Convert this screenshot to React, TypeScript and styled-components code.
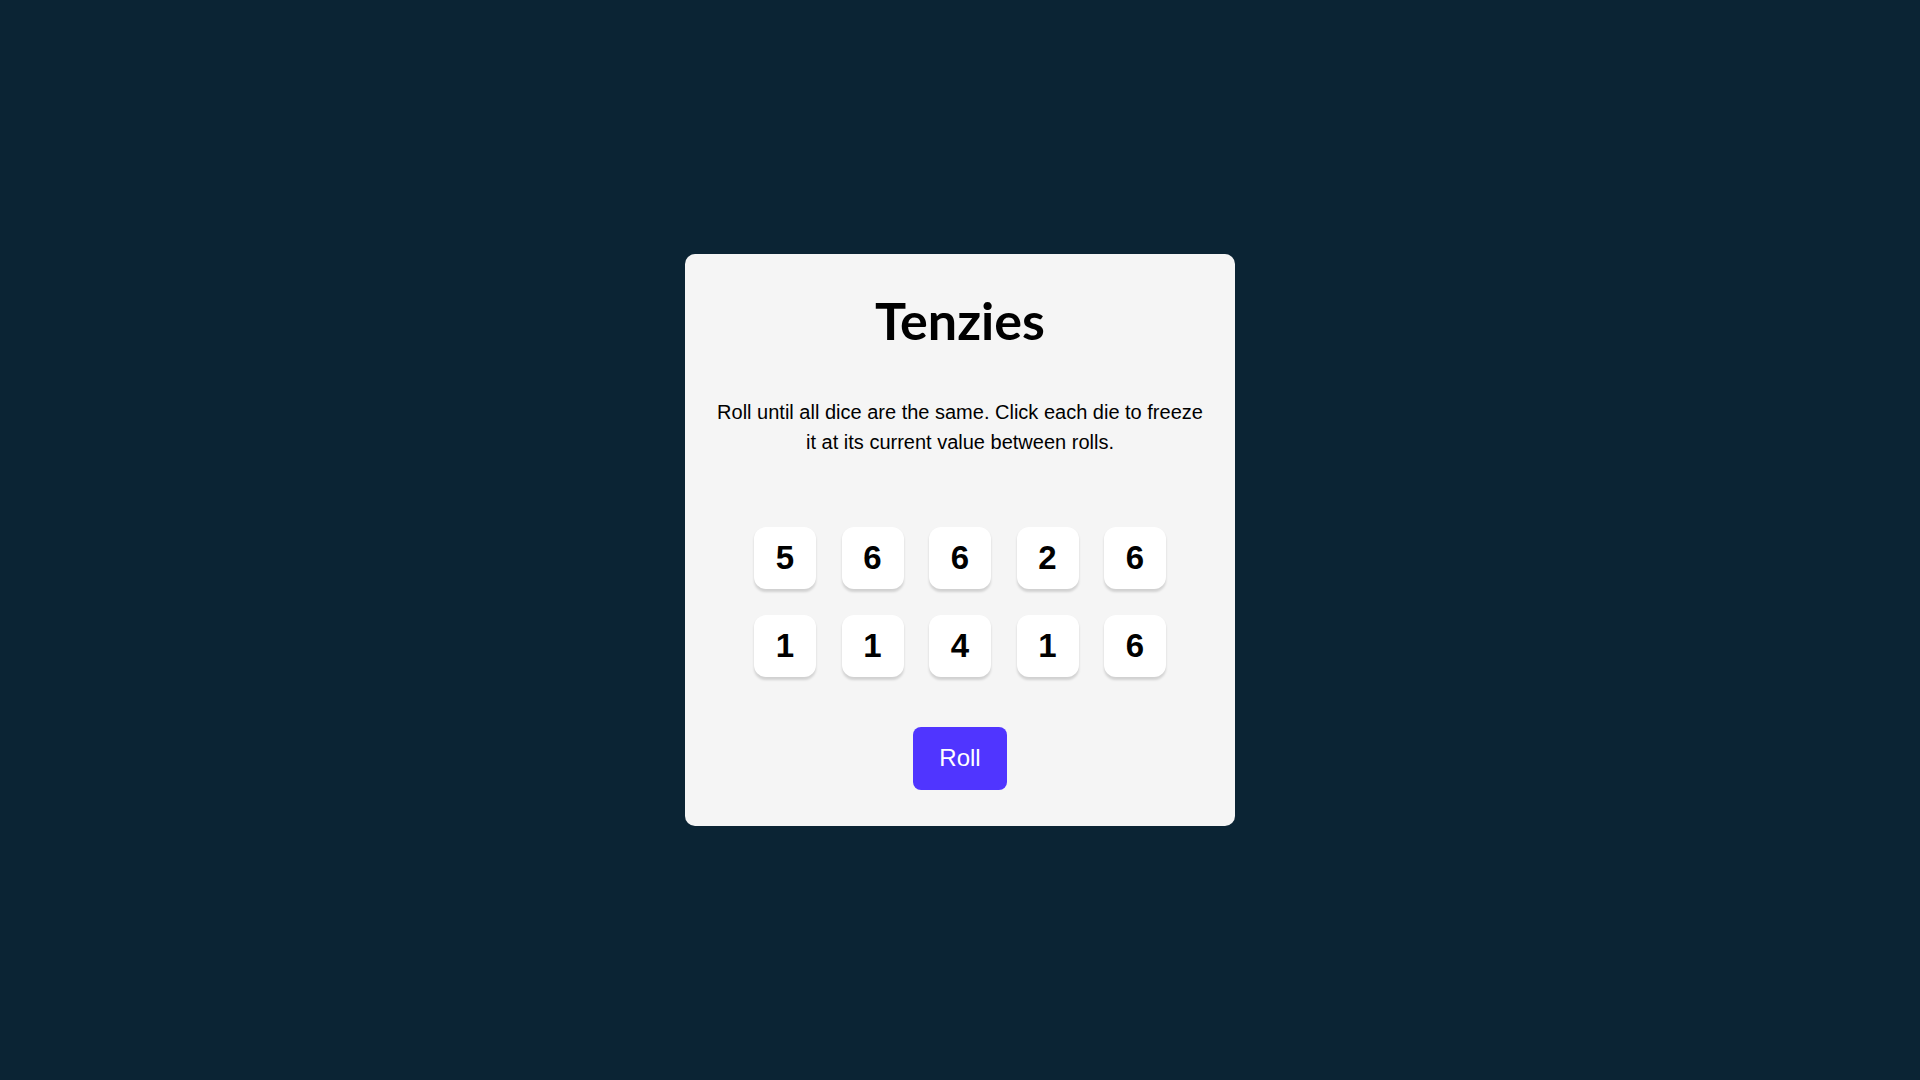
import React from "react";
import styled, { createGlobalStyle } from "styled-components";

const GlobalStyle = createGlobalStyle`
  html, body {
    margin: 0;
    padding: 0;
    background: #0b2434;
  }
  body {
    font-family: "Liberation Sans", Arial, sans-serif;
  }
  * { box-sizing: border-box; }
`;

const Page = styled.div`
  width: 100%;
  height: 100vh;
  display: flex;
  align-items: center;
  justify-content: center;
  background: #0b2434;
`;

const Card = styled.main`
  width: 550px;
  height: 572px;
  background: #f5f5f5;
  border-radius: 10px;
  padding: 35.5px 28px 34px;
  display: flex;
  flex-direction: column;
  align-items: center;
`;

const Title = styled.h1`
  margin: 0;
  font-family: Lato, "Open Sans", sans-serif;
  font-weight: 700;
  font-size: 52px;
  line-height: 60px;
  color: #000;
`;

const Instructions = styled.p`
  margin: 47px 0 0;
  width: 100%;
  text-align: center;
  font-family: "Liberation Sans", Arial, sans-serif;
  font-size: 20px;
  line-height: 30px;
  color: #000;
`;

const DiceGrid = styled.div`
  margin-top: 70px;
  display: grid;
  grid-template-columns: repeat(5, 62px);
  grid-auto-rows: 62.5px;
  column-gap: 25.5px;
  row-gap: 25.5px;
`;

const Die = styled.button<{ $held?: boolean }>`
  width: 62px;
  height: 62.5px;
  border: none;
  padding: 0;
  border-radius: 12px;
  background: ${(p) => (p.$held ? "#59e391" : "#ffffff")};
  box-shadow: 0 2.5px 2.5px rgba(0, 0, 0, 0.15);
  display: flex;
  align-items: center;
  justify-content: center;
  font-family: "Liberation Sans", Arial, sans-serif;
  font-weight: 700;
  font-size: 33px;
  color: #000;
  cursor: pointer;
`;

const RollButton = styled.button`
  margin-top: 50px;
  height: 62.5px;
  padding: 0 26px;
  border: none;
  border-radius: 8px;
  background: #5035ff;
  color: #ffffff;
  font-family: "Liberation Sans", Arial, sans-serif;
  font-size: 24px;
  cursor: pointer;
`;

const initialDice = [5, 6, 6, 2, 6, 1, 1, 4, 1, 6];

export default function App() {
  const [dice, setDice] = React.useState(
    initialDice.map((value, id) => ({ id, value, held: false }))
  );

  const toggle = (id: number) =>
    setDice((d) => d.map((x) => (x.id === id ? { ...x, held: !x.held } : x)));

  const roll = () =>
    setDice((d) =>
      d.map((x) => (x.held ? x : { ...x, value: Math.ceil(Math.random() * 6) }))
    );

  return (
    <>
      <GlobalStyle />
      <Page>
        <Card>
          <Title>Tenzies</Title>
          <Instructions>
            Roll until all dice are the same. Click each die to freeze it at its
            current value between rolls.
          </Instructions>
          <DiceGrid>
            {dice.map((d) => (
              <Die key={d.id} $held={d.held} onClick={() => toggle(d.id)}>
                {d.value}
              </Die>
            ))}
          </DiceGrid>
          <RollButton onClick={roll}>Roll</RollButton>
        </Card>
      </Page>
    </>
  );
}
